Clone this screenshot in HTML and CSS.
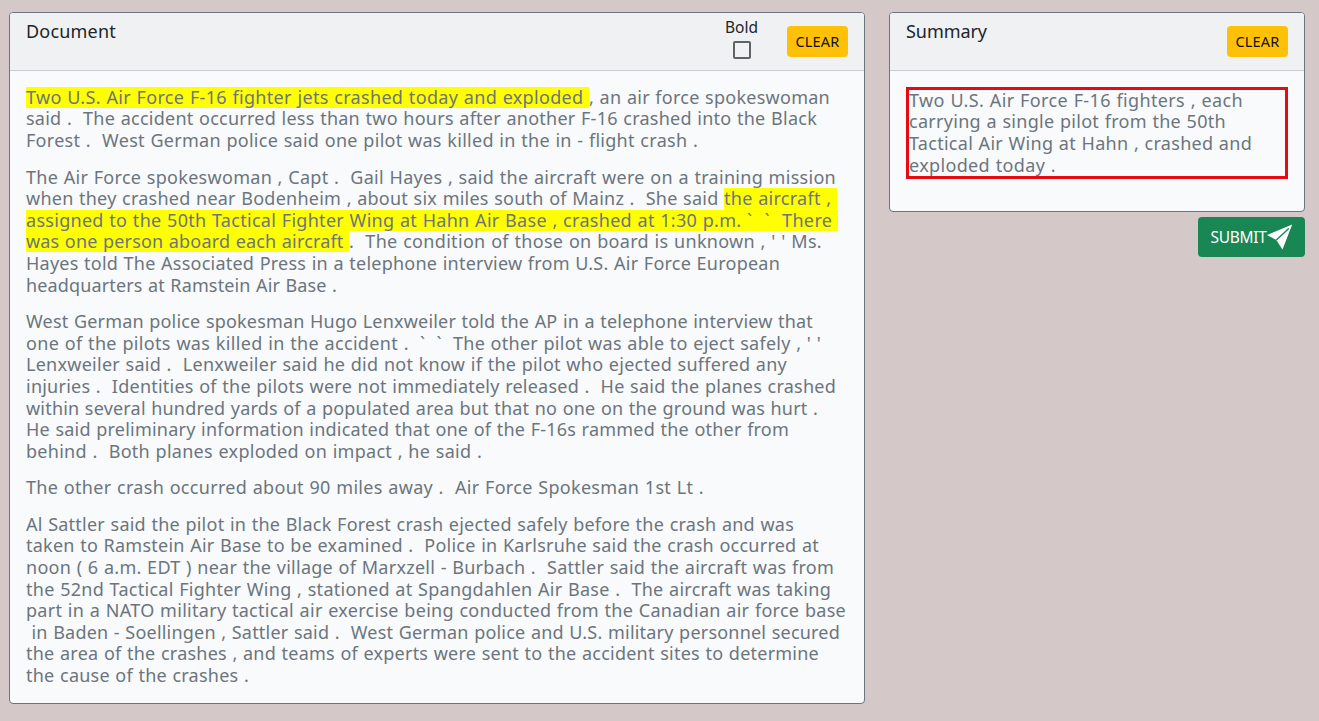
FILE: index.html
```html
<!DOCTYPE html>
<html lang="en">
<head>
<meta charset="utf-8">
<title>Document summary</title>
<link rel="stylesheet" href="styles.css">
</head>
<body>
<main class="layout">
  <section class="card document">
    <header class="card-header">
      <h1 class="title"><span data-width="90">Document</span></h1>
      <div class="actions">
        <label class="bold-toggle"><span data-width="33">Bold</span><input type="checkbox" class="check"></label>
        <button class="btn btn-clear"><span data-width="44">CLEAR</span></button>
      </div>
    </header>
    <div class="card-body">
      <p><span class="line"><mark data-width="563">Two U.S. Air Force F-16 fighter jets crashed today and exploded </mark><span data-width="241">, an air force spokeswoman</span></span>
      <span class="line"><span data-width="791">said .  The accident occurred less than two hours after another F-16 crashed into the Black</span></span>
      <span class="line"><span data-width="672">Forest .  West German police said one pilot was killed in the in - flight crash .</span></span></p>
      <p><span class="line"><span data-width="810">The Air Force spokeswoman , Capt .  Gail Hayes , said the aircraft were on a training mission</span></span>
      <span class="line"><span data-width="698">when they crashed near Bodenheim , about six miles south of Mainz .  She said </span><mark data-width="113">the aircraft , </mark></span>
      <span class="line"><mark data-width="721">assigned to the 50th Tactical Fighter Wing at Hahn Air Base , crashed at 1:30 p.m. </mark><mark data-width="35">` ` </mark><mark data-width="56">There </mark></span>
      <span class="line"><mark data-width="323">was one person aboard each aircraft </mark><span data-width="473">.  The condition of those on board is unknown , ' ' Ms.</span></span>
      <span class="line"><span data-width="754">Hayes told The Associated Press in a telephone interview from U.S. Air Force European</span></span>
      <span class="line"><span data-width="311">headquarters at Ramstein Air Base .</span></span></p>
      <p><span class="line"><span data-width="787">West German police spokesman Hugo Lenxweiler told the AP in a telephone interview that</span></span>
      <span class="line"><span data-width="394">one of the pilots was killed in the accident .  </span><span data-width="33">` ` </span><span data-width="368">The other pilot was able to eject safely , ' '</span></span>
      <span class="line"><span data-width="761">Lenxweiler said .  Lenxweiler said he did not know if the pilot who ejected suffered any</span></span>
      <span class="line"><span data-width="810">injuries .  Identities of the pilots were not immediately released .  He said the planes crashed</span></span>
      <span class="line"><span data-width="792">within several hundred yards of a populated area but that no one on the ground was hurt .</span></span>
      <span class="line"><span data-width="763">He said preliminary information indicated that one of the F-16s rammed the other from</span></span>
      <span class="line"><span data-width="456">behind .  Both planes exploded on impact , he said .</span></span></p>
      <p><span class="line"><span data-width="678">The other crash occurred about 90 miles away .  Air Force Spokesman 1st Lt .</span></span></p>
      <p><span class="line"><span data-width="768">Al Sattler said the pilot in the Black Forest crash ejected safely before the crash and was</span></span>
      <span class="line"><span data-width="793">taken to Ramstein Air Base to be examined .  Police in Karlsruhe said the crash occurred at</span></span>
      <span class="line"><span data-width="808">noon ( 6 a.m. EDT ) near the village of Marxzell - Burbach .  Sattler said the aircraft was from</span></span>
      <span class="line"><span data-width="805">the 52nd Tactical Fighter Wing , stationed at Spangdahlen Air Base .  The aircraft was taking</span></span>
      <span class="line"><span data-width="820">part in a NATO military tactical air exercise being conducted from the Canadian air force base</span></span>
      <span class="line"><span data-width="814"> in Baden - Soellingen , Sattler said .  West German police and U.S. military personnel secured</span></span>
      <span class="line"><span data-width="793">the area of the crashes , and teams of experts were sent to the accident sites to determine</span></span>
      <span class="line"><span data-width="223">the cause of the crashes .</span></span></p>
    </div>
  </section>
  <aside class="side">
    <section class="card">
      <header class="card-header">
        <h2 class="title"><span data-width="81">Summary</span></h2>
        <div class="actions"><button class="btn btn-clear"><span data-width="44">CLEAR</span></button></div>
      </header>
      <div class="card-body summary-body">
        <p class="selected"><span class="line"><span data-width="334">Two U.S. Air Force F-16 fighters , each</span></span>
        <span class="line"><span data-width="317">carrying a single pilot from the 50th</span></span>
        <span class="line"><span data-width="343">Tactical Air Wing at Hahn , crashed and</span></span>
        <span class="line"><span data-width="147">exploded today .</span></span></p>
      </div>
    </section>
    <button class="btn btn-submit"><span data-width="56">SUBMIT</span><svg class="plane" viewBox="0 0 26 26"><path class="plane-body" d="M25.2 .5 0 11 9.3 16 15.5 25.5Z"/><path class="plane-fold" d="M9.3 16 21.8 4.4"/></svg></button>
  </aside>
</main>
<script src="fit.js"></script>
</body>
</html>
```
FILE: styles.css
```css
* { box-sizing: border-box; }
body {
  margin: 0;
  background: #d5c8c8;
  color: #212529;
  font-family: "Noto Sans", "Open Sans", sans-serif;
  font-size: 18px;
  line-height: 21.6px;
}
.layout {
  display: grid;
  grid-template-columns: 856px 416px;
  column-gap: 24px;
  align-items: start;
  padding: 12px 0 0 9px;
}
.card {
  background: #f8fafc;
  border: 1px solid #6c757d;
  border-radius: 4px;
  overflow: hidden;
}
.card-header {
  display: flex;
  justify-content: space-between;
  height: 58px;
  padding: 7px 16px;
  background: #eff1f3;
  border-bottom: 1px solid #c9ccd0;
}
.title { margin: 0; font-size: 18px; font-weight: 400; line-height: 22px; }
.actions { display: flex; align-items: flex-start; gap: 29px; }
.bold-toggle {
  display: flex;
  flex-direction: column;
  align-items: center;
  font-size: 15.5px;
  line-height: 15px;
  gap: 6px;
}
.check {
  appearance: none;
  width: 18px;
  height: 18px;
  margin: 0;
  border: 2px solid #5f6368;
  border-radius: 2px;
}
.btn {
  display: flex;
  align-items: center;
  justify-content: center;
  border: 0;
  border-radius: 4px;
  padding: 0;
  font-family: inherit;
}
.btn-clear {
  width: 61px;
  height: 31px;
  margin-top: 6px;
  padding-bottom: 2px;
  background: #ffc107;
  color: #111;
  font-size: 14.5px;
}
.card-body { padding: 15.8px 16px; color: #6c757d; }
p { margin: 0 0 15px; }
p:last-child { margin-bottom: 0; }
.line { display: block; height: 21.6px; white-space: nowrap; }
[data-width] { display: inline-block; white-space: pre; }
.line [data-width] { vertical-align: top; word-spacing: 0.6px; }
mark {
  height: 21px;
  line-height: 21px;
  background: #ff0;
  color: inherit;
}
.document .card-body { height: 632px; }
.summary-body { height: 140px; }
.selected { border: 3px solid #e60b12; height: 92px; }
.side { display: flex; flex-direction: column; align-items: flex-end; gap: 5px; }
.side .card { width: 100%; }
.btn-submit {
  width: 107px;
  height: 40px;
  background: #198754;
  color: #fff;
  font-size: 15.5px;
}
.plane { width: 26px; height: 26px; margin-top: -1px; }
.plane-body { fill: #fff; }
.plane-fold { fill: none; stroke: #198754; stroke-width: 1.4; }
```
FILE: fit.js
```js
// Tracks each text run so that it fills its measure.
document.querySelectorAll("[data-width]").forEach((run) => {
  const natural = run.getBoundingClientRect().width;
  const spacing = (Number(run.dataset.width) - natural) / run.textContent.length;
  run.style.letterSpacing = spacing + "px";
});
```
